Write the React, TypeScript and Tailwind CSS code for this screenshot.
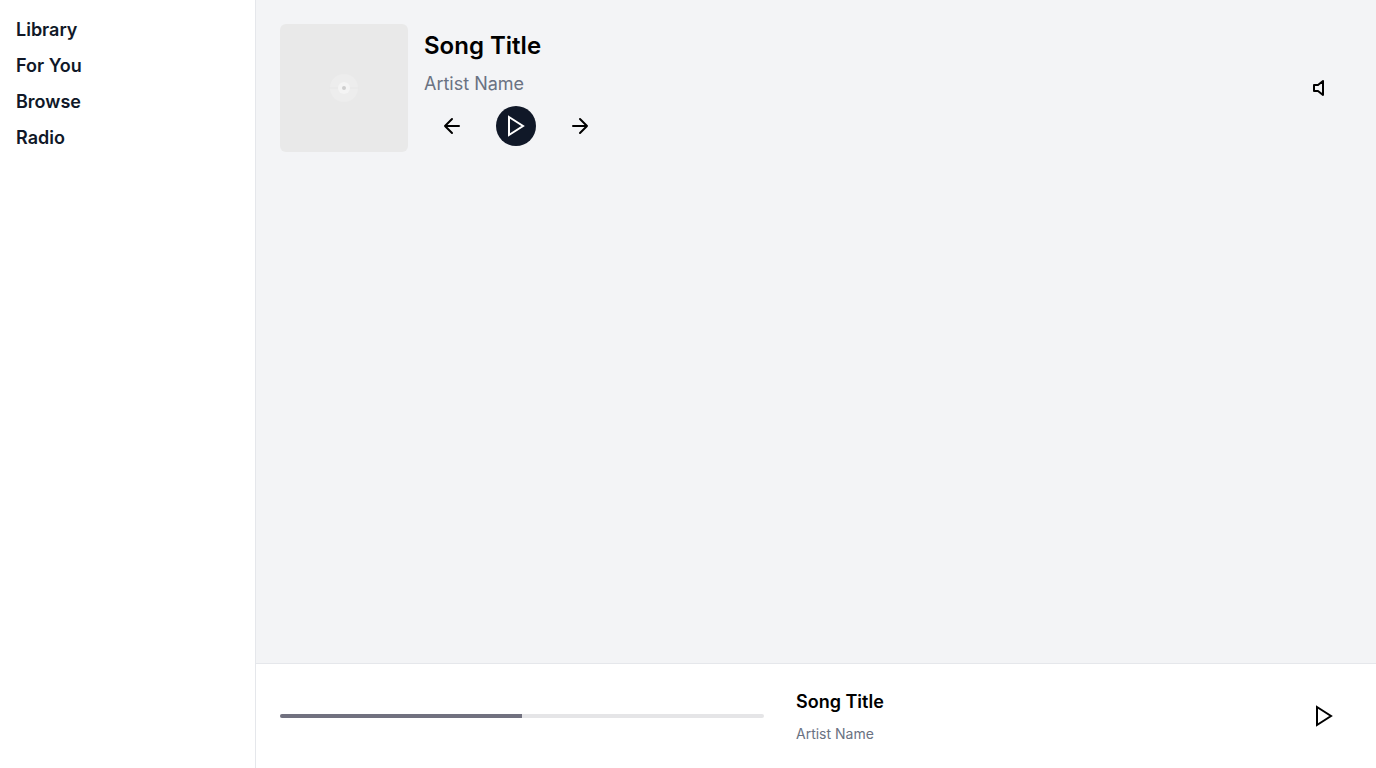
const navItems = ["Library", "For You", "Browse", "Radio"];

const iconProps = {
  width: 24,
  height: 24,
  viewBox: "0 0 24 24",
  fill: "none",
  stroke: "currentColor",
  strokeWidth: 2,
  "aria-hidden": true,
} as const;

function PlayIcon() {
  return (
    <svg {...iconProps}>
      <polygon points="5 3 19 12 5 21 5 3" />
    </svg>
  );
}

function ArrowIcon({ direction }: { direction: "left" | "right" }) {
  return (
    <svg {...iconProps} strokeLinecap="round" strokeLinejoin="round">
      {direction === "left" ? (
        <path d="m12 19-7-7 7-7M19 12H5" />
      ) : (
        <path d="M5 12h14M12 5l7 7-7 7" />
      )}
    </svg>
  );
}

function VolumeIcon() {
  return (
    <svg {...iconProps} strokeLinecap="round" strokeLinejoin="round">
      <polygon points="11 5 6 9 2 9 2 15 6 15 11 19 11 5" />
    </svg>
  );
}

function AlbumCover() {
  return (
    <div className="flex size-32 shrink-0 items-center justify-center rounded-md bg-[#e9e9e9]">
      <svg width="32" height="32" viewBox="0 0 32 32" role="img" aria-label="Album cover">
        <circle cx="16" cy="16" r="14" fill="#ededed" />
        <path d="M1 16h30" stroke="#e7e7e7" />
        <circle cx="16" cy="16" r="6" fill="#f4f4f4" />
        <circle cx="16" cy="16" r="2" fill="#cecece" />
      </svg>
    </div>
  );
}

function Progress({ value }: { value: number }) {
  return (
    <div
      role="progressbar"
      aria-label="Playback progress"
      aria-valuenow={value}
      aria-valuemin={0}
      aria-valuemax={100}
      className="mr-4 h-1 flex-1 overflow-hidden rounded-sm bg-[#e5e5e7]"
    >
      <div className="h-full bg-[#71717f]" style={{ width: `${value}%` }} />
    </div>
  );
}

export default function App() {
  return (
    <div className="flex min-h-screen bg-white font-['Inter',sans-serif] text-black">
      <aside className="w-64 shrink-0 border-r border-gray-200 p-4">
        <nav className="flex flex-col gap-2">
          {navItems.map((item) => (
            <a key={item} href="#" className="text-lg font-semibold text-gray-900">
              {item}
            </a>
          ))}
        </nav>
      </aside>
      <div className="flex min-w-0 flex-1 flex-col">
        <main className="flex-1 bg-gray-100 p-6">
          <div className="flex items-center gap-4">
            <AlbumCover />
            <div className="flex flex-1 flex-col gap-2">
              <h1 className="text-2xl font-semibold">Song Title</h1>
              <p className="text-lg text-gray-500">Artist Name</p>
              <div className="flex items-center gap-4">
                <button type="button" aria-label="Previous" className="flex h-10 items-center px-4">
                  <ArrowIcon direction="left" />
                </button>
                <button
                  type="button"
                  aria-label="Play"
                  className="flex size-10 items-center justify-center rounded-full bg-gray-900 text-white"
                >
                  <PlayIcon />
                </button>
                <button type="button" aria-label="Next" className="flex h-10 items-center px-4">
                  <ArrowIcon direction="right" />
                </button>
              </div>
            </div>
            <button type="button" aria-label="Volume" className="flex h-10 items-center px-4">
              <VolumeIcon />
            </button>
          </div>
        </main>
        <footer className="flex items-center gap-4 border-t border-gray-200 p-6">
          <Progress value={50} />
          <div className="flex flex-1 flex-col gap-2">
            <h2 className="text-lg font-semibold">Song Title</h2>
            <p className="text-sm text-gray-500">Artist Name</p>
          </div>
          <button type="button" aria-label="Play current song" className="flex h-10 items-center px-4">
            <PlayIcon />
          </button>
        </footer>
      </div>
    </div>
  );
}
